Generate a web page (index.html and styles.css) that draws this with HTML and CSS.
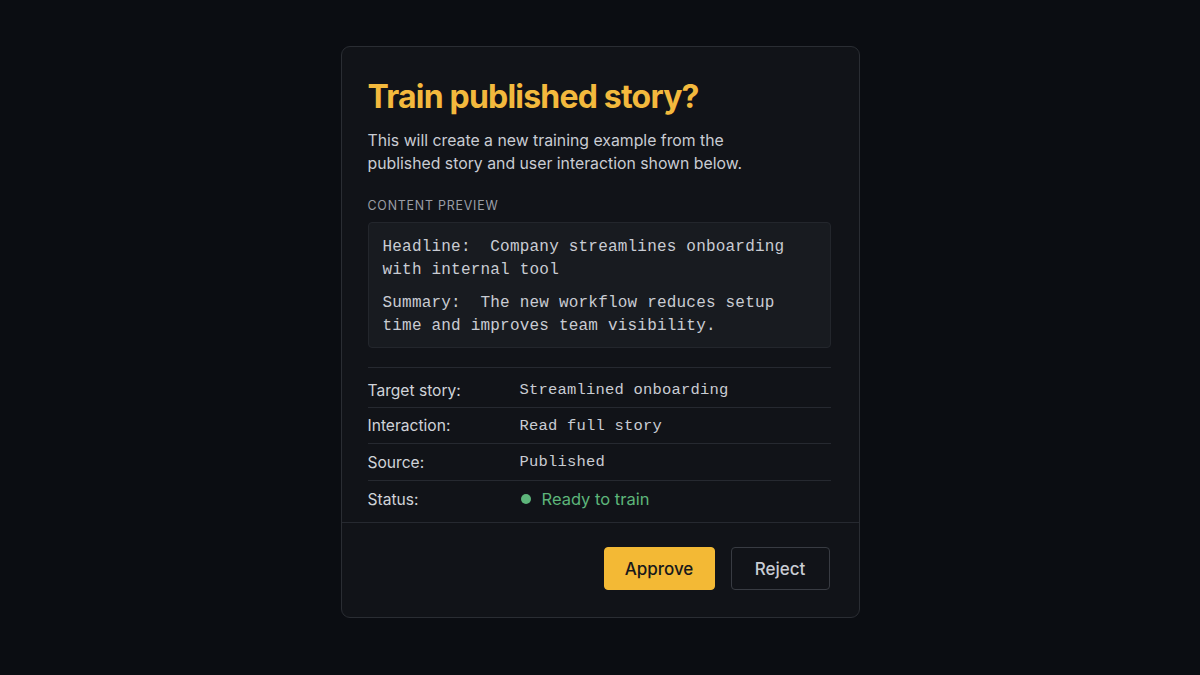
FILE: index.html
```html
<!DOCTYPE html>
<html>
<head>
<meta charset="utf-8">
<link rel="stylesheet" href="styles.css">
</head>
<body>
<div class="stage">
  <div class="card">
    <div class="body">
      <h1 class="title">Train published story?</h1>
      <p class="desc">This will create a new training example from the published story and user interaction shown below.</p>
      <div class="label">Content preview</div>
      <div class="preview">
        <p class="pline">Headline:&nbsp; Company streamlines onboarding with internal tool</p>
        <p class="pline">Summary:&nbsp; The new workflow reduces setup time and improves team visibility.</p>
      </div>
      <div class="rows">
        <div class="row first"><span class="key">Target story:</span><span class="val">Streamlined onboarding</span></div>
        <div class="row"><span class="key">Interaction:</span><span class="val">Read full story</span></div>
        <div class="row third"><span class="key">Source:</span><span class="val">Published</span></div>
        <div class="row last"><span class="key">Status:</span><span class="status"><span class="dot"></span>Ready to train</span></div>
      </div>
    </div>
    <div class="footer">
      <button class="btn approve">Approve</button>
      <button class="btn reject">Reject</button>
    </div>
  </div>
</div>
</body>
</html>
```
FILE: styles.css
```css
* { box-sizing: border-box; }
html, body { margin: 0; padding: 0; }
body {
  background: #0b0d12;
  font-family: Inter, "Liberation Sans", sans-serif;
  width: 1200px;
  height: 675px;
  overflow: hidden;
}
.stage {
  height: 675px;
  display: flex;
  justify-content: center;
  align-items: flex-start;
  padding-top: 46px;
}
.card {
  width: 519px;
  background: #111318;
  border: 1px solid #2a2d33;
  border-radius: 9px;
}
.body {
  padding: 28px 28px 0 26px;
}
.title {
  margin: 0;
  font-size: 32px;
  line-height: 44px;
  font-weight: 700;
  letter-spacing: -0.8px;
  color: #f3b93d;
}
.desc {
  margin: 10px 0 0;
  font-size: 15.8px;
  line-height: 23px;
  color: #c9ccd3;
  max-width: 400px;
}
.label {
  margin-top: 23px;
  font-size: 12.4px;
  letter-spacing: 0.8px;
  text-transform: uppercase;
  color: #9a9ea6;
  line-height: 16px;
}
.preview {
  margin-top: 8px;
  background: #181b20;
  border: 1px solid #23262c;
  border-radius: 4px;
  padding: 13px 14px 10px;
  font-family: "Liberation Mono", "DejaVu Sans Mono", monospace;
  font-size: 16px;
  letter-spacing: 0.2px;
  color: #c9ccd3;
}
.pline {
  margin: 0;
  line-height: 22.5px;
}
.pline + .pline { margin-top: 11px; }
.rows {
  margin-top: 19px;
  border-top: 1px solid #262930;
}
.row {
  display: flex;
  align-items: center;
  height: 36px;
  border-bottom: 1px solid #262930;
}
.row.first { height: 40px; padding-top: 5px; }
.row.third { height: 37px; }
.row.last { border-bottom: none; height: 41px; padding-bottom: 5px; }
.key {
  width: 152px;
  font-size: 15.6px;
  color: #d0d3d9;
}
.val {
  font-family: "Liberation Mono", "DejaVu Sans Mono", monospace;
  font-size: 15.5px;
  letter-spacing: 0.2px;
  color: #c9ccd3;
}
.status {
  display: flex;
  align-items: center;
  font-size: 16.5px;
  color: #5db57a;
}
.dot {
  width: 10px;
  height: 10px;
  border-radius: 50%;
  background: #5db57a;
  margin: 0 11px 0 1px;
}
.footer {
  border-top: 1px solid #262930;
  display: flex;
  justify-content: flex-end;
  gap: 16px;
  padding: 24px 29px 27px;
}
.btn {
  height: 43px;
  border-radius: 4px;
  font-family: Inter, "Liberation Sans", sans-serif;
  font-size: 17px;
  font-weight: 500;
}
.approve {
  width: 111px;
  background: #f3b935;
  border: 1px solid #f3b935;
  color: #17181b;
}
.reject {
  width: 99px;
  background: #111318;
  border: 1px solid #383b42;
  color: #c9ccd3;
}
```
